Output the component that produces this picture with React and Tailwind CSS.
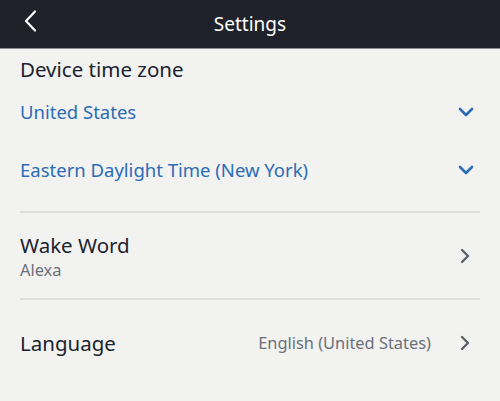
export default function App() {
  const font = { fontFamily: '"Noto Sans", "Open Sans", sans-serif' };
  return (
    <div className="w-[500px] h-[401px] bg-[#f2f2f1] overflow-hidden" style={font}>
      <div className="h-[49px] bg-[#1f222b] border-b border-[#8a8c90] relative">
        <svg className="absolute left-[23px] top-[10px]" width="14" height="22" viewBox="0 0 14 22">
          <path d="M12 1.5 L3 11 L12 20.5" fill="none" stroke="#ffffff" strokeWidth="2.2" strokeLinecap="round" strokeLinejoin="round" />
        </svg>
        <div className="w-full text-center text-white text-[19px] leading-[48px]">Settings</div>
      </div>
      <div className="px-5">
        <div className="pt-[6px] text-[20.5px] leading-[28px] text-[#1b232e]">Device time zone</div>
        <div className="h-[58px] flex items-center justify-between text-[#2b6cb5] text-[18.5px]">
          <span>United States</span>
          <svg width="16" height="10" viewBox="0 0 16 10" className="mr-[6px]">
            <path d="M2 2 L8 8 L14 2" fill="none" stroke="#2b6cb5" strokeWidth="2.6" strokeLinecap="round" strokeLinejoin="round" />
          </svg>
        </div>
        <div className="h-[58px] flex items-center justify-between text-[#2b6cb5] text-[18.5px]">
          <span>Eastern Daylight Time (New York)</span>
          <svg width="16" height="10" viewBox="0 0 16 10" className="mr-[6px]">
            <path d="M2 2 L8 8 L14 2" fill="none" stroke="#2b6cb5" strokeWidth="2.6" strokeLinecap="round" strokeLinejoin="round" />
          </svg>
        </div>
        <div className="mt-[12px] border-t-2 border-[#dedede]"></div>
        <div className="h-[85px] flex items-center justify-between">
          <div className="flex flex-col gap-[2px]">
            <span className="text-[20.5px] leading-[26px] text-[#1b232e]">Wake Word</span>
            <span className="text-[16.4px] leading-[20px] text-[#6b7079]">Alexa</span>
          </div>
          <svg width="10" height="16" viewBox="0 0 10 16" className="mr-[10px]">
            <path d="M2 2 L8 8 L2 14" fill="none" stroke="#5b616b" strokeWidth="2.4" strokeLinecap="round" strokeLinejoin="round" />
          </svg>
        </div>
        <div className="border-t-2 border-[#dedede]"></div>
        <div className="h-[86px] flex items-center justify-between">
          <span className="text-[20.5px] text-[#1b232e]">Language</span>
          <div className="flex items-center">
            <span className="text-[16.4px] text-[#6b7079] mr-[29px]">English (United States)</span>
            <svg width="10" height="16" viewBox="0 0 10 16" className="mr-[10px]">
              <path d="M2 2 L8 8 L2 14" fill="none" stroke="#5b616b" strokeWidth="2.4" strokeLinecap="round" strokeLinejoin="round" />
            </svg>
          </div>
        </div>
      </div>
    </div>
  );
}
